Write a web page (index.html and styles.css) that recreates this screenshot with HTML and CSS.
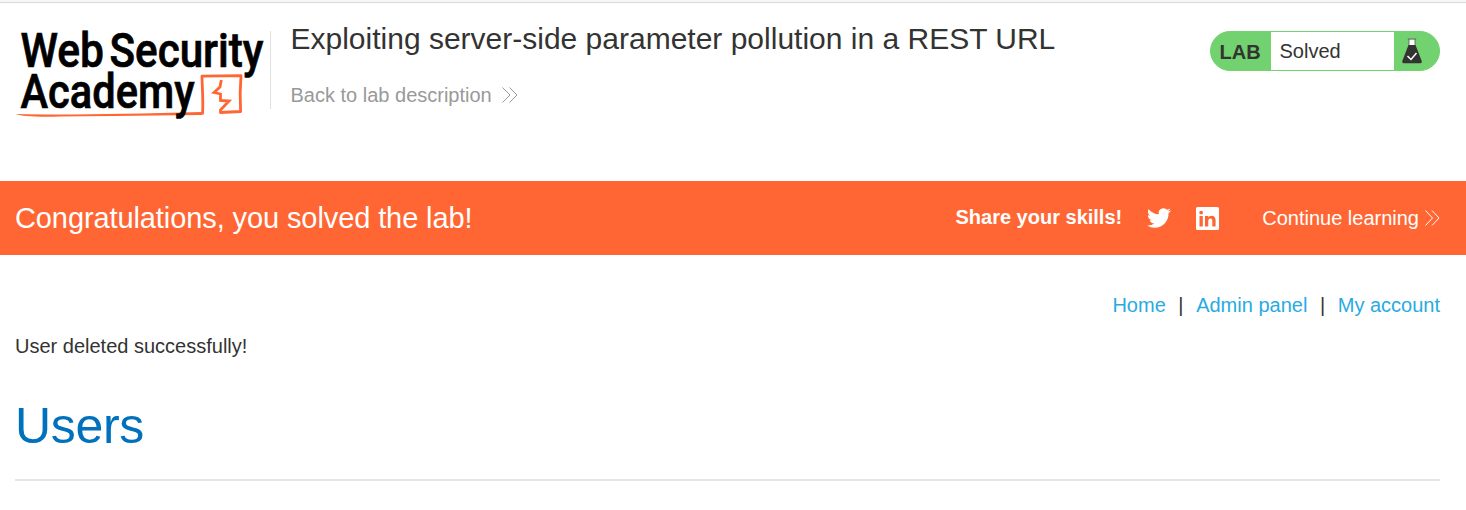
FILE: index.html
```html
<!DOCTYPE html>
<html lang="en">
<head>
<meta charset="utf-8">
<title>Exploiting server-side parameter pollution in a REST URL</title>
<link rel="stylesheet" href="styles.css">
</head>
<body>
<div class="top-edge"></div>
<header class="lab-header">
  <svg class="logo" viewBox="0 0 270 100" width="270" height="100" role="img" aria-label="Web Security Academy">
    <path d="M16 91Q80 92.500 202 89V92Q100 93 60 93.500Q25 94.500 16 91Z" class="logo-line"/>
    <path d="M202.500 91.500C203.500 77 202 62 202 53.200L241 52.600Q239.500 70 240.600 88.500L220 89.500" class="logo-box"/>
    <path d="M221.300 57L220 64L214 69.500L220.500 71L220.500 77.500L229 78L220.500 87V90.500" class="logo-bolt"/>
    <g class="logo-text">
      <text x="20.500" y="44" textLength="83.500" lengthAdjust="spacingAndGlyphs">Web</text>
      <text x="109.500" y="44" textLength="154" lengthAdjust="spacingAndGlyphs">Security</text>
      <text x="20.500" y="85" textLength="174" lengthAdjust="spacingAndGlyphs">Academy</text>
    </g>
  </svg>
  <div class="title-block">
    <h2>Exploiting server-side parameter pollution in a REST URL</h2>
    <a class="back">Back to lab description
      <svg class="chevrons" width="16" height="16" viewBox="0 0 16 16"><path d="M.5 .5L8 8L.5 15.500M7.500 .5L15 8L7.500 15.500"/></svg>
    </a>
  </div>
  <div class="status">
    <span class="status-lab">LAB</span>
    <span class="status-text">Solved</span>
    <span class="status-icon">
      <svg width="20" height="26" viewBox="0 0 20 26">
        <path d="M7 1.500V8H13V1.500Z" fill="#fff"/>
        <path d="M5.800 1H14.200M7 1V7M13 1V7" fill="none" stroke="#555" stroke-width=".8"/>
        <path d="M6.500 7H13.500L19.700 23Q20.200 25.300 18 25.300H2Q-.2 25.300 .3 23Z" fill="#333332"/>
        <path d="M5.500 18L9 21.500L14.500 15" fill="none" stroke="#fff" stroke-width="1.500"/>
      </svg>
    </span>
  </div>
</header>
<section class="banner">
  <h4>Congratulations, you solved the lab!</h4>
  <div class="share">
    <b>Share your skills!</b>
    <svg class="twitter" width="24" height="24" viewBox="0 0 24 24"><path d="M23.950 4.570a10 10 0 0 1-2.820.77 4.960 4.960 0 0 0 2.160-2.720c-.95.550-2 .95-3.130 1.180a4.920 4.920 0 0 0-8.380 4.480C7.690 8.090 4.070 6.130 1.640 3.160a4.820 4.820 0 0 0-.67 2.480c0 1.710.87 3.210 2.190 4.100a4.900 4.900 0 0 1-2.230-.62v.06a4.920 4.920 0 0 0 3.950 4.830 5 5 0 0 1-2.210.08 4.940 4.940 0 0 0 4.600 3.420A9.870 9.870 0 0 1 0 19.540a13.990 13.990 0 0 0 7.550 2.210c9.050 0 14-7.500 14-13.980 0-.21 0-.42-.02-.63a9.940 9.940 0 0 0 2.460-2.550z"/></svg>
    <svg class="linkedin" width="23" height="23" viewBox="0 0 23 23"><path fill-rule="evenodd" d="M1.500 0H21.500Q23 0 23 1.500V21.500Q23 23 21.500 23H1.500Q0 23 0 21.500V1.500Q0 0 1.500 0ZM3.500 9V19.500H6.800V9ZM5.150 3.700A1.900 1.900 0 1 0 5.150 7.500A1.900 1.900 0 1 0 5.150 3.700ZM9 9V19.500H12.300V14.200C12.300 12.500 13 11.500 14.400 11.500S16.300 12.600 16.300 14.200V19.500H19.600V13.500C19.600 10.400 18.200 8.700 15.600 8.700C13.900 8.700 12.800 9.500 12.200 10.500V9Z"/></svg>
    <a class="continue">Continue learning
      <svg class="chevrons" width="15" height="16" viewBox="0 0 15 16"><path d="M.5 .5L7.500 8L.5 15.500M7 .5L14 8L7 15.500"/></svg>
    </a>
  </div>
</section>
<main class="content">
  <nav><a>Home</a><span>|</span><a>Admin panel</a><span>|</span><a>My account</a></nav>
  <p>User deleted successfully!</p>
  <h1>Users</h1>
  <hr>
</main>
</body>
</html>
```
FILE: styles.css
```css
* { box-sizing: border-box; }
body {
  margin: 0;
  height: 510px;
  overflow: hidden;
  background: #fff;
  color: #333332;
  font: 20px/24px "Liberation Sans", Arial, sans-serif;
}
h1, h2, h4, p { margin: 0; font-weight: 400; }
.top-edge { height: 3px; border-bottom: 1px solid #d9dadd; background: #f5f6f8; }
.lab-header {
  display: flex;
  align-items: flex-start;
  height: 178px;
  padding: 20px 26px 0 0;
}
.logo { flex: none; overflow: visible; }
.logo-text {
  font: 500 48px Roboto, sans-serif;
  fill: #000;
  stroke: #000;
  stroke-width: .7;
}
.logo-line { fill: #ff6633; }
.logo-box, .logo-bolt { fill: none; stroke: #ff6633; stroke-width: 2.800; stroke-linejoin: round; }
.logo-bolt { stroke-linejoin: miter; }
.title-block {
  height: 78px;
  margin-top: 8px;
  padding-left: 19.500px;
  border-left: 1px solid #e0e0e0;
}
h2 { margin-top: -10px; font-size: 30px; line-height: 36px; white-space: nowrap; }
.back { display: flex; align-items: center; gap: 10px; margin-top: 26px; color: #999; }
.chevrons { fill: none; stroke: currentColor; stroke-width: 1; }
.status {
  display: flex;
  width: 230px;
  height: 40px;
  margin: 8px 0 0 auto;
  border: 1px solid #72d26f;
  border-radius: 20px;
  overflow: hidden;
  background: #72d26f;
  line-height: 38px;
}
.status-lab { width: 60px; padding-left: 8.500px; font-weight: 700; line-height: 40px; }
.status-text { width: 123px; padding-left: 8.500px; background: #fff; }
.status-icon { padding: 6px 0 0 8px; line-height: 0; }
.banner {
  display: flex;
  align-items: center;
  justify-content: space-between;
  height: 74px;
  padding: 0 26px 0 15px;
  background: #ff6633;
  color: #fff;
}
h4 { font-size: 29px; letter-spacing: -.1px; }
.share { display: flex; align-items: center; }
.share b { margin-top: -2px; }
.share path { fill: #fff; }
.twitter { margin-left: 25px; }
.linkedin { margin-left: 25px; }
.continue { display: flex; align-items: center; gap: 6px; margin-left: 43px; }
.share .chevrons path { fill: none; }
.content { padding: 38px 26px 0 15px; }
nav { display: flex; justify-content: flex-end; color: #29abe2; }
nav span { margin: 0 12.600px; color: #333332; }
p { margin-top: 17px; }
h1 { margin-top: 38px; color: #0071bc; font-size: 50px; line-height: 60px; letter-spacing: -.3px; }
hr { height: 2px; margin: 23px 0 0; border: 0; background: #e5e5e5; }
```
